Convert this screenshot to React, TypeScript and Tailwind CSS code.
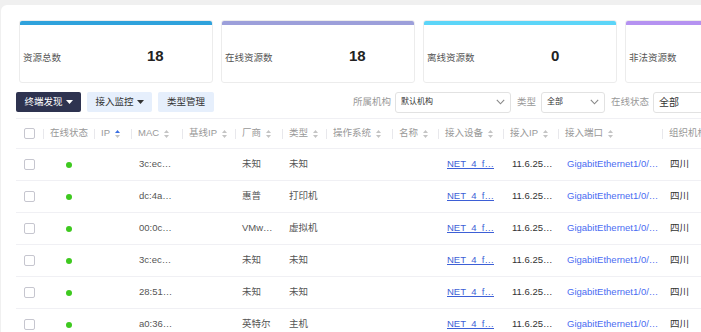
import React from "react";

const FONT = { fontFamily: '"Liberation Sans", "Noto Sans CJK SC", sans-serif' };

interface StatCardProps {
  label: string;
  value: string;
  bar: string;
}

const StatCard: React.FC<StatCardProps> = ({ label, value, bar }) => {
  return (
    <div className="w-[194px] shrink-0 h-[63px] rounded-[3px] border border-[#ececec] overflow-hidden bg-white">
      <div className={`h-[4px] ${bar}`} />
      <div className="flex items-start pl-[3px]">
        <div className="w-[124px] pt-[27px] text-[9.5px] leading-[12px] text-[#555]">{label}</div>
        <div className="pt-[22px] text-[15px] leading-[18px] font-bold text-[#222]">{value}</div>
      </div>
    </div>
  );
};

const Caret: React.FC<{ className?: string }> = ({ className }) => (
  <svg width="7" height="4" viewBox="0 0 7 4" className={className}>
    <path d="M0 0 L7 0 L3.5 4 Z" fill="currentColor" />
  </svg>
);

const Chevron: React.FC = () => (
  <svg width="9" height="6" viewBox="0 0 9 6" className="text-[#888] shrink-0">
    <path d="M0.8 0.8 L4.5 4.8 L8.2 0.8" fill="none" stroke="currentColor" strokeWidth="1.1" />
  </svg>
);

const SortIcon: React.FC<{ up?: boolean }> = ({ up }) => (
  <svg width="5" height="8" viewBox="0 0 5 8" className="ml-[5px] shrink-0">
    <path d="M2.5 0 L5 3 L0 3 Z" fill={up ? "#3b6fe3" : "#c4c4c4"} />
    <path d="M2.5 8 L5 5 L0 5 Z" fill="#c4c4c4" />
  </svg>
);

const Checkbox: React.FC = () => (
  <div className="w-[11px] h-[11px] rounded-[2px] border border-[#c6c6cf] bg-white" />
);

const COLS =
  "grid grid-cols-[27px_51px_37px_51px_53px_47px_44px_66px_46px_65px_55px_104px_90px]";

const headers: { label: string; sort?: boolean; up?: boolean }[] = [
  { label: "在线状态" },
  { label: "IP", sort: true, up: true },
  { label: "MAC", sort: true },
  { label: "基线IP", sort: true },
  { label: "厂商", sort: true },
  { label: "类型", sort: true },
  { label: "操作系统", sort: true },
  { label: "名称", sort: true },
  { label: "接入设备", sort: true },
  { label: "接入IP", sort: true },
  { label: "接入端口", sort: true },
  { label: "组织机构" },
];

const rows = [
  { mac: "3c:ec…", vendor: "未知", type: "未知" },
  { mac: "dc:4a…", vendor: "惠普", type: "打印机" },
  { mac: "00:0c…", vendor: "VMw…", type: "虚拟机" },
  { mac: "3c:ec…", vendor: "未知", type: "未知" },
  { mac: "28:51…", vendor: "未知", type: "未知" },
  { mac: "a0:36…", vendor: "英特尔", type: "主机" },
];

export default function App() {
  return (
    <div className="w-[701px] h-[332px] overflow-hidden bg-[#f0f0f0] pt-[5px] pl-px" style={FONT}>
      <div className="h-full bg-white rounded-tl-[6px] overflow-hidden">
        {/* stat cards */}
        <div className="flex gap-[8px] pl-[18px] pt-[15px]">
          <StatCard label="资源总数" value="18" bar="bg-[#2fa2dc]" />
          <StatCard label="在线资源数" value="18" bar="bg-[#9c9fda]" />
          <StatCard label="离线资源数" value="0" bar="bg-[#5cd5f8]" />
          <StatCard label="非法资源数" value="" bar="bg-[#b592f1]" />
        </div>

        {/* toolbar */}
        <div className="flex items-center mt-[9px] pl-[15px] h-[20px] text-[9.5px] whitespace-nowrap">
          <button className="shrink-0 h-[20px] w-[65px] rounded-[2px] bg-[#2e3350] text-white flex items-center justify-center gap-[3px]">
            终端发现
            <Caret />
          </button>
          <button className="shrink-0 ml-[6px] h-[20px] w-[65px] rounded-[2px] bg-[#e6effc] text-[#333] flex items-center justify-center gap-[3px]">
            接入监控
            <Caret />
          </button>
          <button className="shrink-0 ml-[6px] h-[20px] w-[56px] rounded-[2px] bg-[#e6effc] text-[#333] flex items-center justify-center">
            类型管理
          </button>

          <span className="shrink-0 ml-[139px] text-[#999] text-[9.5px]">所属机构</span>
          <div className="shrink-0 ml-[4px] w-[116px] h-[21px] border border-[#e2e2e2] rounded-[3px] flex items-center justify-between pl-[5px] pr-[5px]">
            <span className="text-[8px] text-[#333]">默认机构</span>
            <Chevron />
          </div>
          <span className="shrink-0 ml-[6px] text-[#999] text-[9.5px]">类型</span>
          <div className="shrink-0 ml-[5px] w-[64px] h-[21px] border border-[#e2e2e2] rounded-[3px] flex items-center justify-between pl-[5px] pr-[5px]">
            <span className="text-[8px] text-[#333]">全部</span>
            <Chevron />
          </div>
          <span className="shrink-0 ml-[6px] text-[#999] text-[9.5px]">在线状态</span>
          <div className="shrink-0 ml-[4px] w-[90px] h-[21px] border border-[#e2e2e2] rounded-[3px] flex items-center pl-[5px]">
            <span className="text-[10px] text-[#333]">全部</span>
          </div>
        </div>

        {/* table */}
        <div className="mt-[6px] ml-[15px] w-[800px]">
          <div className={`${COLS} h-[31px] items-center border-t border-b border-[#f0f0f4] text-[9.5px] text-[#999]`}>
            <div className="pl-[8px] flex items-center">
              <Checkbox />
            </div>
            {headers.map((h, i) => (
              <div key={i} className="flex items-center whitespace-nowrap">
                <span className="w-px h-[10px] bg-[#e8e8ec] shrink-0" />
                <span className="ml-[6px]">{h.label}</span>
                {h.sort && <SortIcon up={h.up} />}
              </div>
            ))}
          </div>

          {rows.map((r, i) => (
            <div
              key={i}
              className={`${COLS} h-[32px] items-center border-b border-[#f0f0f4] text-[9.5px] text-[#555] whitespace-nowrap`}
            >
              <div className="pl-[8px] flex items-center">
                <Checkbox />
              </div>
              <div className="flex justify-center">
                <span className="w-[6px] h-[6px] rounded-full bg-[#3ec91f]" />
              </div>
              <div />
              <div className="pl-[8px]">{r.mac}</div>
              <div />
              <div className="pl-[7px]">{r.vendor}</div>
              <div className="pl-[7px]">{r.type}</div>
              <div />
              <div />
              <div className="pl-[9px]">
                <span className="text-[#3d5fd6] underline">NET_4_f…</span>
              </div>
              <div className="pl-[9px] text-[#333]">11.6.25…</div>
              <div className="pl-[9px] text-[#4a6cf2]">GigabitEthernet1/0/…</div>
              <div className="pl-[8px] text-[#333]">四川</div>
            </div>
          ))}
        </div>
      </div>
    </div>
  );
}
